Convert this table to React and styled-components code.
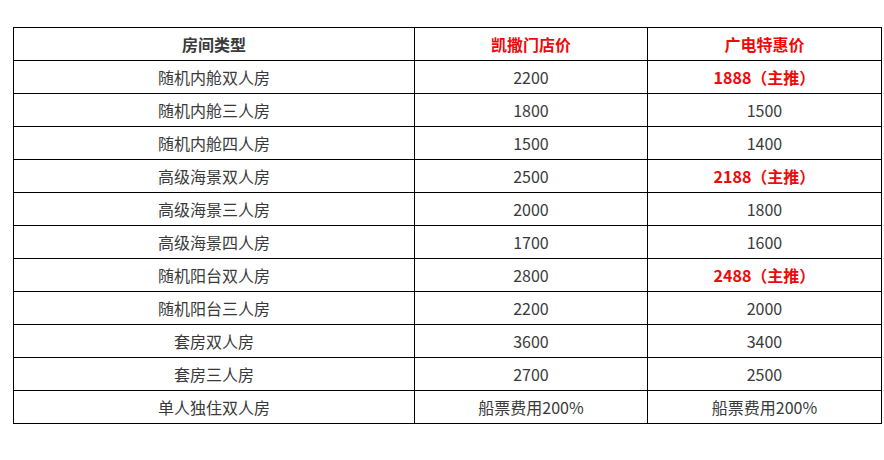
import React from 'react';
import styled, {createGlobalStyle} from 'styled-components';

const GlobalStyle = createGlobalStyle`
  body {
    margin: 0;
    background: #fff;
    font-family: "Noto Sans CJK SC", "Noto Sans", sans-serif;
  }
`;

const Page = styled.div`
  padding: 27px 3px 0 13px;
`;

const PriceTable = styled.table`
  width: 869px;
  border-collapse: collapse;
  table-layout: fixed;
  border: 1px solid #000;
`;

const Row = styled.tr`
  height: 33px;
`;

const Cell = styled.td`
  border: 1px solid #000;
  padding: 0;
  text-align: center;
  vertical-align: middle;
  font-size: 16px;
  line-height: 20px;
  color: ${(p) => (p.$red ? '#ee0a0a' : '#3a3a3a')};
  font-weight: ${(p) => (p.$bold ? 700 : 400)};
`;

const rows = [
  ['随机内舱双人房', '2200', '1888（主推）', true],
  ['随机内舱三人房', '1800', '1500'],
  ['随机内舱四人房', '1500', '1400'],
  ['高级海景双人房', '2500', '2188（主推）', true],
  ['高级海景三人房', '2000', '1800'],
  ['高级海景四人房', '1700', '1600'],
  ['随机阳台双人房', '2800', '2488（主推）', true],
  ['随机阳台三人房', '2200', '2000'],
  ['套房双人房', '3600', '3400'],
  ['套房三人房', '2700', '2500'],
  ['单人独住双人房', '船票费用200%', '船票费用200%'],
];

export default function App() {
  return (
    <Page>
      <GlobalStyle />
      <PriceTable>
        <colgroup>
          <col style={{width: 401}} />
          <col style={{width: 233}} />
          <col style={{width: 234}} />
        </colgroup>
        <tbody>
          <Row>
            <Cell $bold>房间类型</Cell>
            <Cell $bold $red>凯撒门店价</Cell>
            <Cell $bold $red>广电特惠价</Cell>
          </Row>
          {rows.map(([type, store, deal, hot]) => (
            <Row key={type}>
              <Cell>{type}</Cell>
              <Cell>{store}</Cell>
              <Cell $red={hot} $bold={hot}>{deal}</Cell>
            </Row>
          ))}
        </tbody>
      </PriceTable>
    </Page>
  );
}
